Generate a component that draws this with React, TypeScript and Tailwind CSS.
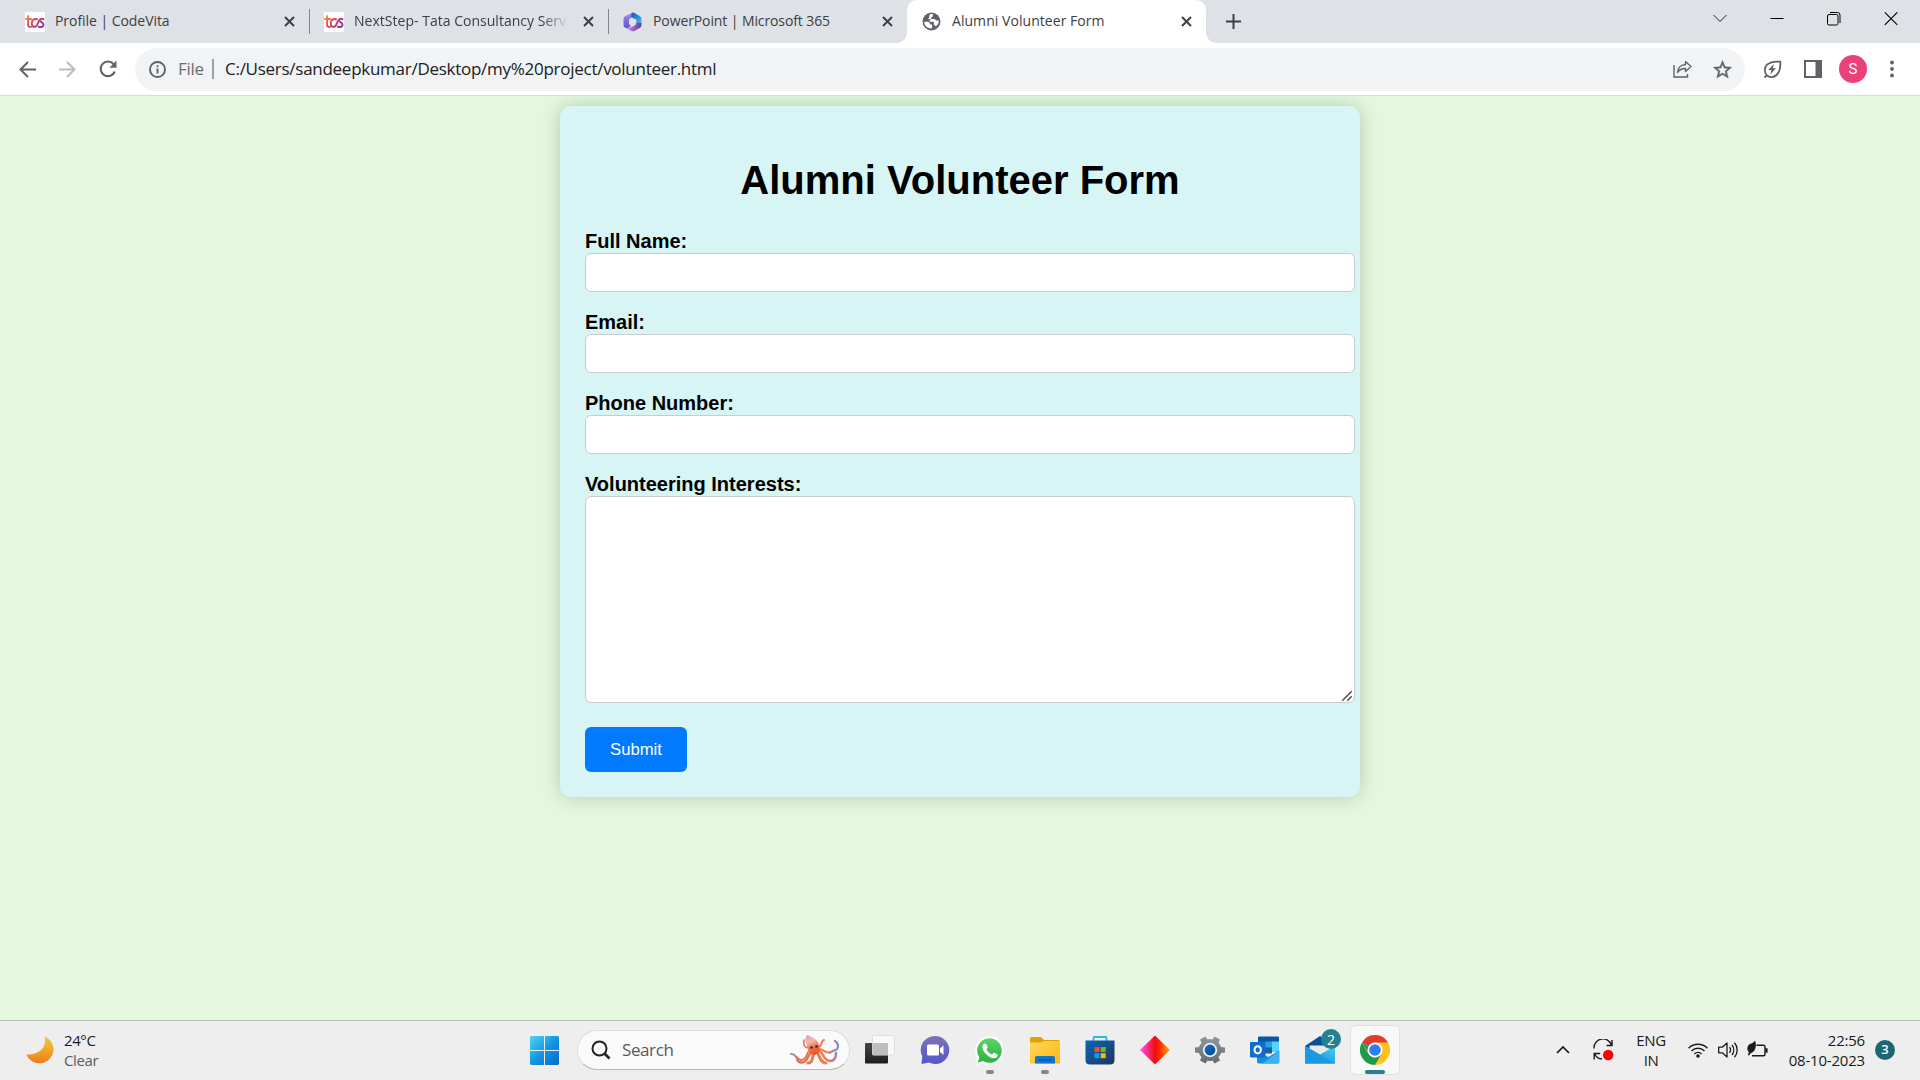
import type { ReactNode } from "react";

function TcsIcon() {
  return (
    <svg width="20" height="20" viewBox="0 0 20 20" fill="none" strokeWidth="2" strokeLinecap="round" strokeLinejoin="round">
      <defs>
        <linearGradient id="tcs" x1="0" y1="3" x2="16" y2="17" gradientUnits="userSpaceOnUse">
          <stop offset="0" stopColor="#f9a83b" />
          <stop offset="0.5" stopColor="#e8405f" />
          <stop offset="1" stopColor="#7a3fa5" />
        </linearGradient>
      </defs>
      <path fill="#fff" d="M0 0h20v20H0z" />
      <g stroke="url(#tcs)">
        <path d="M3 4v8.500c0 2 1.300 2.600 3 2.300M1 7h5" />
        <path d="M12 7.200c-3-1-5 .8-5.200 3.700-.2 3 1.600 4.500 4 3.600 2.200-.8 2.300-6.200 4.600-7.300 1-.5 2.200-.4 3 0" />
        <path d="M15 8c0 2.500 3.500 2.300 3.500 4.700 0 2-2.200 2.800-4.700 2" />
      </g>
    </svg>
  );
}

function M365Icon() {
  return (
    <svg width="19" height="20" viewBox="0 0 19 20">
      <defs>
        <linearGradient id="m1" x1="0" y1="0" x2="0" y2="1">
          <stop offset="0" stopColor="#a98cf0" />
          <stop offset="1" stopColor="#5a4fd0" />
        </linearGradient>
        <linearGradient id="m2" x1="0" y1="0" x2="1" y2="1">
          <stop offset="0" stopColor="#1c4fb0" />
          <stop offset="1" stopColor="#3cc4f5" />
        </linearGradient>
        <linearGradient id="m3" x1="0" y1="0" x2="1" y2="0">
          <stop offset="0" stopColor="#cf8df5" />
          <stop offset="1" stopColor="#5f3aa0" />
        </linearGradient>
      </defs>
      <path fill="url(#m1)" d="M8.500 1 2 4.300Q.5 5.200.5 7v6q0 1.800 1.500 2.600L4 16.500 8 14 6 12V7.500L9 5z" />
      <path fill="url(#m2)" d="M8.500 1Q10 .2 11.500 1L17 4.300q1.500.9 1.500 2.700v4.500L13.500 11V8L8 5z" />
      <path fill="url(#m3)" d="m13.500 10.500 5 .5v2q0 1.800-1.500 2.700l-5 3q-2 1.200-4 0l-5-2.700 4.500-.5 5-2.500z" />
    </svg>
  );
}

function GlobeIcon() {
  return (
    <svg width="19" height="19" viewBox="0 0 19 19">
      <circle cx="9.500" cy="9.500" r="9" fill="#5f6368" />
      <path
        fill="#fff"
        d="M2.200 9.700h3.500c1.900.2 2.200 1.400 2.300 2.700h2.100v3.800c-4.200.7-8-2.600-7.900-6.500zM7.300 5.600V3.100c.6-1 2-1.200 3.600-1v1.300c0 1-.7 1.500-1.600 1.600v1.200c0 .7-.5 1-1.200 1H6.300V6.600zM13.600 14.500c0-1-.8-1.600-1.700-1.600v-1.900c0-.7-.4-1.200-1.100-1.200H8.500c-.9 0-1.200-.8-.7-1.400l1.500-1.400h3c1 0 1 1.600 2.100 1.600h2.300c.4 2.300-.9 4.800-3.100 5.900z"
      />
    </svg>
  );
}

function CloseGlyph() {
  return (
    <svg width="11" height="11" viewBox="0 0 11 11" stroke="#3c4043" strokeWidth="2">
      <path d="m1 1 9 9M10 1l-9 9" />
    </svg>
  );
}

type TabProps = { icon: ReactNode; title: string; active?: boolean; divider?: boolean; fade?: boolean; tracking: string };

function Tab({ icon, title, active, divider, fade, tracking }: TabProps) {
  return (
    <div className={`relative flex h-[43px] w-[299px] shrink-0 items-center pl-[15px] ${active ? "rounded-t-[10px] bg-white" : ""}`}>
      <span className="flex w-[20px] shrink-0 items-center">{icon}</span>
      <span
        className={`mb-[2px] ml-[10px] w-[214px] overflow-hidden text-[14px] leading-[20px] whitespace-nowrap text-[#3c4043] ${tracking} ${
          fade ? "[mask-image:linear-gradient(to_right,black_88%,transparent)]" : ""
        }`}
      >
        {title}
      </span>
      <span className="ml-[15px] flex shrink-0">
        <CloseGlyph />
      </span>
      {divider && <span className="absolute top-[9px] right-[-1px] h-[25px] w-px bg-[#80868b]" />}
      {active && (
        <>
          <span className="absolute bottom-0 left-[-10px] h-[10px] w-[10px] bg-[radial-gradient(circle_at_0_0,#dee1e6_9.5px,#fff_10px)]" />
          <span className="absolute right-[-10px] bottom-0 h-[10px] w-[10px] bg-[radial-gradient(circle_at_100%_0,#dee1e6_9.5px,#fff_10px)]" />
        </>
      )}
    </div>
  );
}

function TabStrip() {
  return (
    <div className="flex h-[43px] bg-[#dee1e6] pl-[10px]">
      <Tab icon={<TcsIcon />} title="Profile | CodeVita" divider tracking="tracking-[-0.05px]" />
      <Tab icon={<TcsIcon />} title="NextStep- Tata Consultancy Services" divider fade tracking="tracking-[0.02px]" />
      <Tab icon={<M365Icon />} title="PowerPoint | Microsoft 365" tracking="tracking-[-0.1px]" />
      <Tab icon={<GlobeIcon />} title="Alumni Volunteer Form" active tracking="tracking-[0.05px]" />
      <svg className="mt-[14px] ml-[20px]" width="15" height="15" viewBox="0 0 15 15" stroke="#3c4043" strokeWidth="2">
        <path d="M7.500 0v15M0 7.500h15" />
      </svg>
      <div className="mt-[11px] mr-[22px] ml-auto flex h-[15px] gap-[43px]">
        <svg width="14" height="15" viewBox="0 0 14 15" fill="none" stroke="#222">
          <path d="m.5 4 6.500 6.500L13.500 4" />
        </svg>
        <svg width="14" height="15" viewBox="0 0 14 15" stroke="#000">
          <path d="M.5 7.500h13" />
        </svg>
        <svg width="14" height="15" viewBox="0 0 14 15" fill="none" stroke="#000">
          <rect x=".5" y="3.500" width="10.500" height="10.500" rx="1.500" />
          <path d="M3 1.500h7.500a2.500 2.500 0 0 1 2.500 2.500v8" />
        </svg>
        <svg width="14" height="15" viewBox="0 0 14 15" stroke="#000" strokeWidth="1.100">
          <path d="m.8 1.300 12.500 12.500M13.300 1.300.8 13.800" />
        </svg>
      </div>
    </div>
  );
}

function Toolbar() {
  return (
    <div className="flex h-[53px] items-center border-b border-[#d9dbdd] bg-white pl-[19px]">
      <svg width="17" height="17" viewBox="0 0 17 17" fill="none" stroke="#5f6368" strokeWidth="2">
        <path d="M17 8.500H2M9 1 1.500 8.500 9 16" />
      </svg>
      <svg className="ml-[23px]" width="17" height="17" viewBox="0 0 17 17" fill="none" stroke="#babcbe" strokeWidth="2">
        <path d="M0 8.500h15M8 1l7.500 7.500L8 16" />
      </svg>
      <svg className="ml-[23px]" width="18" height="18" viewBox="0 0 18 18" fill="none">
        <path d="M15.800 11.500A7.300 7.300 0 1 1 14.500 4" stroke="#5f6368" strokeWidth="2.100" />
        <path d="M17.500.5v7.200h-7.200z" fill="#5f6368" />
      </svg>
      <div className="ml-[18px] flex h-[43px] w-[1610px] items-center rounded-full bg-[#f1f3f4]">
        <svg className="ml-[14px]" width="17" height="17" viewBox="0 0 17 17" fill="none" stroke="#5f6368" strokeWidth="1.900">
          <circle cx="8.500" cy="8.500" r="7.500" />
          <path d="M8.500 7.500v5M8.500 4.300v1.900" />
        </svg>
        <span className="ml-[12px] w-[26px] text-[17px] tracking-[-0.3px] text-[#6b6f74]">File</span>
        <span className="ml-[8px] h-[20px] w-[2px] bg-[#9aa0a6]" />
        <span className="ml-[11px] text-[17px] tracking-[-0.27px] whitespace-nowrap text-[#202124]">
          C:/Users/sandeepkumar/Desktop/my%20project/volunteer.html
        </span>
        <svg className="ml-auto" width="19" height="18" viewBox="0 0 19 18" fill="none" stroke="#5f6368" strokeWidth="1.400">
          <path d="M1 5v12h13.500v-3" />
          <path d="M12.500 1.500 18 6.500l-5.500 5V8.500C9 8.500 6.500 9.500 4.500 12.500c.5-4.500 3.500-8 8-8z" strokeLinejoin="round" />
        </svg>
        <svg className="mr-[13px] ml-[21px]" width="19" height="19" viewBox="0 0 24 24" fill="#5f6368">
          <path
            stroke="#5f6368"
            strokeWidth=".5"
            d="m22 9.240-7.190-.62L12 2 9.190 8.630 2 9.240l5.460 4.730L5.820 21 12 17.270 18.180 21l-1.630-7.030L22 9.240zM12 15.400l-3.760 2.270 1-4.280-3.320-2.880 4.380-.38L12 6.100l1.710 4.040 4.380.38-3.320 2.880 1 4.280L12 15.400z"
            transform="translate(-1.900 -1.600) scale(1.160)"
          />
        </svg>
      </div>
      <svg className="ml-[18px]" width="19" height="19" viewBox="0 0 19 19" fill="none" stroke="#5f6368" strokeWidth="1.800">
        <path d="M1.500 17.500 4 15M4 15.500C1 12.500 1.300 7.500 4 4.700 7 1.900 12 1.300 17.300 1.600c.4 5.400-.4 9.900-3.300 12.900-2.600 2.800-7 3.600-10 1z" />
        <path d="M10.800 4 5.300 10h3.200l-1.200 4.600 5.700-6.400H9.900z" fill="#5f6368" stroke="none" />
      </svg>
      <svg className="ml-[22px]" width="18" height="18" viewBox="0 0 18 18">
        <path fill="#5f6368" fillRule="evenodd" d="M0 0h18v18H0zM2 2v14h9.500V2z" />
      </svg>
      <span className="ml-[17px] flex h-[28px] w-[28px] items-center justify-center rounded-full bg-[#ec407a] font-[Roboto] text-[15px] text-white">S</span>
      <svg className="ml-[23px]" width="4" height="18" viewBox="0 0 4 18" fill="#5f6368">
        <circle cx="2" cy="2.500" r="1.900" />
        <circle cx="2" cy="9" r="1.900" />
        <circle cx="2" cy="15.500" r="1.900" />
      </svg>
    </div>
  );
}

function Field({ label }: { label: string }) {
  return (
    <label className="mb-[19px] block h-[62px]">
      <span className="block h-[23px] text-[20px] leading-[23px] font-bold">{label}</span>
      <input className="block h-[39px] w-[770px] rounded-[6px] border border-[#ccc] bg-white px-3" />
    </label>
  );
}

function VolunteerForm() {
  return (
    <form className="h-[691px] w-[800px] rounded-[10px] bg-[#d7f5f5] px-[25px] pt-[50px] font-['Liberation_Sans',Arial,sans-serif] text-black shadow-[0_0_19px_rgba(0,0,0,0.2)]">
      <h1 className="mb-[26px] h-[48px] text-center text-[40px] leading-[48px] font-bold">Alumni Volunteer Form</h1>
      <Field label="Full Name:" />
      <Field label="Email:" />
      <Field label="Phone Number:" />
      <label className="relative block w-[770px]">
        <span className="block h-[23px] text-[20px] leading-[23px] font-bold">Volunteering Interests:</span>
        <textarea className="block h-[207px] w-[770px] resize-none rounded-[6px] border border-[#ccc] bg-white p-3" />
        <svg className="absolute right-[3px] bottom-[2px]" width="10" height="10" viewBox="0 0 10 10" stroke="#505050" strokeWidth="1.500">
          <path d="M.3 9.700 9.700.3M5.300 9.700l4.400-4.400" />
        </svg>
      </label>
      <button type="button" className="mt-[24px] block h-[45px] w-[102px] rounded-[6px] bg-[#007bff] text-[16.670px] text-white">
        Submit
      </button>
    </form>
  );
}

function StartIcon() {
  return (
    <svg width="29" height="29" viewBox="0 0 29 29">
      <defs>
        <linearGradient id="win" x1="0" y1="0" x2="29" y2="29" gradientUnits="userSpaceOnUse">
          <stop offset="0" stopColor="#4fd3fb" />
          <stop offset="0.5" stopColor="#1596e2" />
          <stop offset="1" stopColor="#0669ce" />
        </linearGradient>
      </defs>
      <path fill="url(#win)" d="M1 0h13v14H0V1zM15 0h13l1 1v13H15zM0 15h14v14H1l-1-1zM15 15h14v13l-1 1H15z" />
    </svg>
  );
}

function OctopusIcon() {
  return (
    <svg width="49" height="30" viewBox="0 0 49 30" fill="none" strokeLinecap="round">
      <defs>
        <linearGradient id="oct" x1="18" y1="0" x2="26" y2="18" gradientUnits="userSpaceOnUse">
          <stop offset="0" stopColor="#c9a0d8" />
          <stop offset="0.35" stopColor="#f7b9a5" />
          <stop offset="0.7" stopColor="#ee7048" />
          <stop offset="1" stopColor="#e85a30" />
        </linearGradient>
        <linearGradient id="leg" x1="0" y1="0" x2="49" y2="0" gradientUnits="userSpaceOnUse">
          <stop offset="0" stopColor="#8d8fd0" />
          <stop offset="0.2" stopColor="#e8714f" />
          <stop offset="0.75" stopColor="#f0804f" />
          <stop offset="1" stopColor="#7a86dc" />
        </linearGradient>
      </defs>
      <g stroke="url(#leg)" strokeWidth="2.500">
        <path d="M20 15c-5 5-3 10-9 10-5 0-5-7-10-6" strokeWidth="2" />
        <path d="M22 17c-5 3-4 11-11 10.500-3 0-4-3-4-5" />
        <path d="M25 17c-4 4-1 11-7 11" strokeWidth="3" />
        <path d="M27 16c2 4 3 12 9 12" strokeWidth="3" />
        <path d="M28 15c5 1 5 11 12 11 5 0 6-5 6-8" />
        <path d="M29 14c5 0 8 6 12 3 4-3 7-1 7-6 0-2-1-4-3-5" strokeWidth="2.200" />
        <path d="M28 12c5 0 2-6 6-7" strokeWidth="2" />
        <path d="M19 13c-4 0-6-2-5-8" strokeWidth="1.600" />
      </g>
      <path fill="url(#oct)" d="M17 0c5 2 11 4 12 10 1.500 5 0 9-4 10-5 0-7-5-8-9-1-3-3-7 0-11z" />
      <g fill="#3c2238">
        <circle cx="21.500" cy="12.500" r="1.300" />
        <circle cx="26.500" cy="11.500" r="1.300" />
      </g>
    </svg>
  );
}

function TaskViewIcon() {
  return (
    <svg width="30" height="30" viewBox="0 0 30 30">
      <defs>
        <linearGradient id="tv" x1="0" y1="0" x2="0" y2="1">
          <stop offset="0" stopColor="#474747" />
          <stop offset="1" stopColor="#1d1d1d" />
        </linearGradient>
      </defs>
      <rect x="0" y="8" width="23" height="20.500" rx="1" fill="url(#tv)" />
      <rect x="7.500" y=".5" width="22" height="19.500" rx="1" fill="#f8f8f8" stroke="#dedede" />
      <path fill="#bebebe" d="M7.500 8H23v12H7.500z" />
    </svg>
  );
}

function ChatIcon() {
  return (
    <svg width="30" height="30" viewBox="0 0 30 30">
      <defs>
        <linearGradient id="chat" x1="0" y1="0" x2="0" y2="1">
          <stop offset="0" stopColor="#8270b5" />
          <stop offset="1" stopColor="#5258cc" />
        </linearGradient>
      </defs>
      <path fill="url(#chat)" d="M15 1a14 14 0 1 1-6 26.500L1.500 29l.8-7.500A14 14 0 0 1 15 1z" />
      <rect x="7" y="9.500" width="12" height="11" rx="1.500" fill="#fff" />
      <path fill="#fff" d="m20 13.500 3.500-3v9.500L20 17z" />
    </svg>
  );
}

function WhatsAppIcon() {
  return (
    <svg width="31" height="31" viewBox="0 0 31 31">
      <defs>
        <linearGradient id="wa" x1="0" y1="0" x2="0" y2="1">
          <stop offset="0" stopColor="#5ed468" />
          <stop offset="1" stopColor="#28b340" />
        </linearGradient>
      </defs>
      <path fill="#fff" d="M15.500 1a14.500 14.500 0 1 1-7 27.200L.8 30.500l2.200-7.800A14.500 14.500 0 0 1 15.500 1z" />
      <path fill="url(#wa)" d="M15.500 3.200a12.300 12.300 0 1 1-6.300 22.900l-5.400 1.500 1.500-5.200A12.300 12.300 0 0 1 15.500 3.200z" />
      <path fill="#fff" d="M9.400 9.300c.9-1 2.100-1.200 2.700-.2l1.500 3c.3.700-.8 1.700-1.200 2.300 1.400 2.500 3.200 4 5.600 5.100.7-.5 1.400-2 2.200-1.700l3 1.400c.9.500.5 1.900-.1 2.700-1.500 1.900-4.200 1.700-6.500.6-3.300-1.500-6-4.200-7.500-7.400-1-2.200-.9-4.400.3-5.800z" />
    </svg>
  );
}

function FolderIcon() {
  return (
    <svg width="30" height="30" viewBox="0 0 30 30">
      <defs>
        <linearGradient id="fold" x1="0" y1="0" x2="1" y2="1">
          <stop offset="0" stopColor="#ffd75e" />
          <stop offset="1" stopColor="#fbb90c" />
        </linearGradient>
      </defs>
      <path fill="#dfa106" d="M0 3.500Q0 2 1.500 2H10q1 0 2 1l2 2h14.500Q30 5 30 6.500V12H0z" />
      <path fill="url(#fold)" d="M0 7.500h11l2.500-1.500H30v21.500q0 1-1 1H1q-1 0-1-1z" />
      <path fill="#0f76cc" d="M5 28.500V23q0-2 2-2h16q2 0 2 2v5.500z" />
      <path stroke="#0a4f96" strokeWidth="1.300" d="M8.500 25h13" />
    </svg>
  );
}

function StoreIcon() {
  return (
    <svg width="30" height="30" viewBox="0 0 30 30">
      <defs>
        <linearGradient id="store" x1="0" y1="0" x2="1" y2="1">
          <stop offset="0" stopColor="#0b66b8" />
          <stop offset="1" stopColor="#20355c" />
        </linearGradient>
      </defs>
      <path fill="none" stroke="#2bb4ef" strokeWidth="1.800" d="M8.500 7V3q0-1 1-1h11q1 0 1 1v4" />
      <path fill="url(#store)" d="M.5 5.500h29V25q0 4.500-4.500 4.500H5Q.5 29.500.5 25z" />
      <path fill="#f25022" d="M9.500 12h5v5h-5z" />
      <path fill="#7fba00" d="M15.700 12h5v5h-5z" />
      <path fill="#00a4ef" d="M9.500 18.200h5v5h-5z" />
      <path fill="#ffb900" d="M15.700 18.200h5v5h-5z" />
    </svg>
  );
}

function DiamondIcon() {
  return (
    <svg width="30" height="30" viewBox="0 0 30 30">
      <defs>
        <linearGradient id="dia">
          <stop offset="0" stopColor="#f5f" />
          <stop offset="0.5" stopColor="#f00d0d" />
          <stop offset="0.65" stopColor="#ff2600" />
          <stop offset="1" stopColor="#ffb000" />
        </linearGradient>
      </defs>
      <path fill="url(#dia)" d="M15 .5 30 15 15 29.500 0 15z" />
    </svg>
  );
}

function SettingsIcon() {
  return (
    <svg width="30" height="30" viewBox="0 0 30 30">
      <defs>
        <linearGradient id="gear" x1="0" y1="0" x2="0" y2="1">
          <stop offset="0" stopColor="#8e979f" />
          <stop offset="1" stopColor="#636b73" />
        </linearGradient>
        <linearGradient id="hub" x1="0" y1="0" x2="1" y2="1">
          <stop offset="0" stopColor="#0d72c8" />
          <stop offset="1" stopColor="#0a4588" />
        </linearGradient>
      </defs>
      <path
        fill="url(#gear)"
        d="m10.500 1.500 2 3q2.500-1 5 0l2-3 5.500 3-1.500 3.500q2 1.800 2.500 4l4 .5v5l-4 .5q-.5 2.200-2.500 4l1.500 3.500-5.500 3-2-3q-2.500 1-5 0l-2 3L5 25.500 6.500 22q-2-1.800-2.500-4l-4-.5v-5L4 12q.5-2.200 2.500-4L5 4.500z"
      />
      <circle cx="15" cy="15" r="7.200" fill="#eef1f4" />
      <circle cx="15" cy="15" r="5.400" fill="url(#hub)" />
    </svg>
  );
}

function OutlookIcon() {
  return (
    <svg width="30" height="30" viewBox="0 0 30 30">
      <path fill="#0a55a4" d="M8 2.500Q8 1.500 9 1.500h19q1 0 1 1V8H8z" />
      <path fill="#0f6cc4" d="M8 6.500h7.500V17H8z" />
      <path fill="#2aa0e6" d="M15.500 6.500H22V17h-6.500z" />
      <path fill="#52d3f8" d="M22 6.500h7V17h-7z" />
      <path fill="#1b5fae" d="M15 12.500h7v6h-7z" />
      <path fill="#1490df" d="M7 16.500 18.500 22 29 15.500v11q0 2-2 2H9q-2 0-2-2z" />
      <path fill="#39b4ee" d="m14 27.500 15.500-12V27q0 1.500-1.500 1.500H9z" />
      <rect x="0" y="7" width="15.500" height="15.500" rx="1" fill="#0f6cd0" />
      <ellipse cx="7.700" cy="14.800" rx="3.200" ry="3.600" fill="none" stroke="#fff" strokeWidth="2" />
    </svg>
  );
}

function MailIcon() {
  return (
    <svg width="30" height="30" viewBox="0 0 30 30">
      <defs>
        <linearGradient id="mail" x1="0" y1="1" x2="1" y2="0">
          <stop offset="0" stopColor="#1580d8" />
          <stop offset="1" stopColor="#43d0f8" />
        </linearGradient>
      </defs>
      <path fill="#0a4f9c" d="M0 11 15 1l15 10-15 9z" />
      <path fill="#e9e9e9" d="M4.500 10.500h21V16L15 21 4.500 15z" />
      <path fill="url(#mail)" d="m0 11 15 8.500L30 11v17.500H0z" />
      <path fill="#1a98e2" d="m0 11 30 17.500H0z" />
    </svg>
  );
}

function ChromeIcon() {
  return (
    <svg width="30" height="30" viewBox="0 0 30 30">
      <path fill="#e33b2e" d="M15 15 2 7.500A15 15 0 0 1 28 7.500z" />
      <path fill="#fcc31e" d="M15 15V7.500h13A15 15 0 0 1 15 30z" />
      <path fill="#1f9a48" d="M15 30A15 15 0 0 1 2 7.500l6.500 11.200L15 22.500l6.500-3.800z" />
      <path fill="#1f9a48" d="m2 7.500 7 11.500 6-4z" />
      <circle cx="15" cy="15" r="7.500" fill="#fff" />
      <circle cx="15" cy="15" r="5.800" fill="#2f7df0" />
    </svg>
  );
}

function Slot({ children, running }: { children: ReactNode; running?: boolean }) {
  return (
    <div className="relative flex h-[48px] w-[55px] items-center justify-center">
      {children}
      {running && <span className="absolute bottom-0 h-[4px] w-[8px] rounded-full bg-[#868686]" />}
    </div>
  );
}

function Taskbar() {
  return (
    <div className="flex h-[60px] items-start border-t border-[#b9bdb9] bg-[#eee] pt-[5px] text-[#1b1b1b]">
      <div className="flex h-[48px] w-[530px] shrink-0 items-center pl-[26px]">
        <svg className="mb-px" width="28" height="28" viewBox="0 0 28 28">
          <defs>
            <linearGradient id="moon" x1="0" y1="0" x2="0" y2="1">
              <stop offset="0" stopColor="#f5c344" />
              <stop offset="0.4" stopColor="#efb12c" />
              <stop offset="1" stopColor="#ef7a1a" />
            </linearGradient>
          </defs>
          <path fill="url(#moon)" d="M18.500.3A14 14 0 1 1 .4 18.500C12 19.500 21.500 12 18.500.3z" />
        </svg>
        <div className="mb-px ml-[10px] text-[15px] leading-[20px] tracking-[-0.4px]">
          <div>24°C</div>
          <div className="text-[#5c5c5c]">Clear</div>
        </div>
      </div>
      <div className="flex h-[48px] items-center">
        <StartIcon />
        <div className="mr-[2px] ml-[18px] flex h-[40px] w-[273px] items-center rounded-full border border-[#dcdcdc] border-b-[#b8b8b8] bg-[#fafafa]">
          <svg className="ml-[13px]" width="20" height="20" viewBox="0 0 20 20" fill="none" stroke="#222" strokeWidth="2">
            <circle cx="8.500" cy="8.500" r="7" />
            <path d="m13.500 13.500 5 5" strokeWidth="2.600" />
          </svg>
          <span className="ml-[11px] text-[17px] tracking-[-0.4px] text-[#5a5a5a]">Search</span>
          <span className="mr-[10px] ml-auto">
            <OctopusIcon />
          </span>
        </div>
        <div className="flex">
          <Slot><TaskViewIcon /></Slot>
          <Slot><ChatIcon /></Slot>
          <Slot running><WhatsAppIcon /></Slot>
          <Slot running><FolderIcon /></Slot>
          <Slot><StoreIcon /></Slot>
          <Slot><DiamondIcon /></Slot>
          <Slot><SettingsIcon /></Slot>
          <Slot><OutlookIcon /></Slot>
          <Slot>
            <MailIcon />
            <span className="absolute top-[3px] right-[6px] flex h-[20px] w-[20px] items-center justify-center rounded-full bg-[#25808f] text-[14px] text-white">2</span>
          </Slot>
          <div className="relative ml-[4px] flex h-[48px] w-[48px] items-center justify-center rounded-[5px] bg-[#f8f8f8] shadow-[0_0_1px_1px_rgba(0,0,0,0.06)]">
            <ChromeIcon />
            <span className="absolute bottom-0 h-[4px] w-[20px] rounded-full bg-[#25808f]" />
          </div>
        </div>
      </div>
      <div className="mr-[25px] ml-auto flex h-[48px] items-center">
        <svg width="14" height="10" viewBox="0 0 14 10" fill="none" stroke="#1b1b1b" strokeWidth="1.700">
          <path d="m1 8 6-6 6 6" />
        </svg>
        <svg className="ml-[22px]" width="22" height="22" viewBox="0 0 22 22" fill="none" stroke="#1b1b1b" strokeWidth="1.400">
          <path d="M2 9.500A9 9 0 0 1 19.500 6M20 1v5.500h-5.500M10 20c-3 0-6-2-7.500-5.200M2.200 20.500v-6h6" />
          <circle cx="16.200" cy="16" r="5.200" fill="#f00" stroke="none" />
        </svg>
        <div className="ml-[15px] w-[44px] text-center text-[15px] leading-[20px] tracking-[-0.4px]">
          <div>ENG</div>
          <div>IN</div>
        </div>
        <svg className="ml-[15px]" width="20" height="16" viewBox="0 0 20 16" fill="none" stroke="#1b1b1b" strokeWidth="1.400">
          <path d="M.6 6.200a13.200 13.200 0 0 1 18.800 0M3.500 9a9.200 9.200 0 0 1 13 0M6.400 11.900a5.100 5.100 0 0 1 7.200 0" />
          <circle cx="10" cy="14" r="1.800" fill="#1b1b1b" stroke="none" />
        </svg>
        <svg className="ml-[10px]" width="20" height="18" viewBox="0 0 20 18" fill="none" stroke="#1b1b1b" strokeWidth="1.300">
          <path d="M.7 6.200h3.600L9 2v14l-4.700-4.200H.7z" strokeLinejoin="round" />
          <path d="M11.500 6.200a4.500 4.500 0 0 1 0 5.600M14 4a8 8 0 0 1 0 10M16.500 1.800a11 11 0 0 1 0 14.400" />
        </svg>
        <svg className="mb-[3px] ml-[9px]" width="21" height="18" viewBox="0 0 21 18" fill="none" stroke="#1b1b1b" strokeWidth="1.400">
          <path d="M9.500 5.200h7q1.500 0 1.500 1.500v7.600q0 1.500-1.500 1.500H5" />
          <path d="M18.500 8.500h1.800v4h-1.800z" fill="#1b1b1b" strokeWidth=".5" />
          <path d="M8 .5C9.500 4 9.200 9 6.500 11.500 4.500 13 3 13 2.200 15.500L.8 15c.3-1 .8-2 1.200-2.700C-1 9 .5 5 3.500 3.800 5.500 3 7 2.500 8 .5z" fill="#1b1b1b" stroke="none" />
        </svg>
        <div className="ml-[5px] w-[92px] text-right text-[15px] leading-[20px] tracking-[-0.2px]">
          <div>22:56</div>
          <div>08-10-2023</div>
        </div>
        <span className="ml-[10px] flex h-[20px] w-[20px] items-center justify-center rounded-full bg-[#1d6674] text-[13px] font-semibold text-white">3</span>
      </div>
    </div>
  );
}

export default function App() {
  return (
    <div className="flex h-[1080px] w-[1920px] flex-col overflow-hidden bg-[#e4f8df] font-['Open_Sans','Noto_Sans',sans-serif]">
      <TabStrip />
      <Toolbar />
      <main className="flex flex-1 justify-center overflow-hidden pt-[10px]">
        <VolunteerForm />
      </main>
      <Taskbar />
    </div>
  );
}
